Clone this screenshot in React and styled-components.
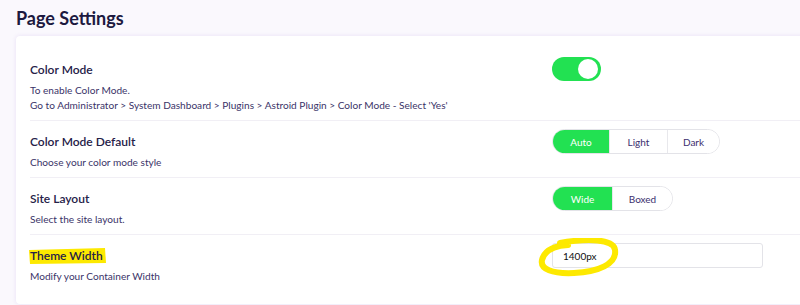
import React from 'react'
import styled, { createGlobalStyle } from 'styled-components'

const Global = createGlobalStyle`
body{margin:0;background:#faf8fd;font-family:Lato,"Noto Sans",sans-serif;overflow:hidden;}
`

const Page = styled.div`
padding:9px 0 0 16px;
height:305px;
box-sizing:border-box;`

const Title = styled.h1`
margin:0 0 8px;
font-size:18px;
font-weight:700;
line-height:19px;
color:#1c1940;`

const Card = styled.div`
background:#fff;
margin-right:-20px;
border-radius:4px;
box-shadow:0 0 4px rgba(120,80,200,0.14);
padding:13px 0 13px 14px;`

const Row = styled.div`
display:grid;
grid-template-columns:522px 1fr;
padding:8px 0 7px;
border-top:${p => (p.$first ? 'none' : '1px solid #f1eff5')};`

const Label = styled.div`
position:relative;
display:inline-block;
margin-top:5px;
font-size:12px;
line-height:16px;
font-weight:600;
color:#252148;
z-index:0;`

const Desc = styled.div`
margin-top:5px;
font-size:10.1px;
line-height:15px;
color:#3a3368;`

const Marker = styled.svg`
position:absolute;
left:-1px;
top:-1px;
z-index:-1;`

const Toggle = styled.div`
width:49px;
height:24px;
border-radius:12px;
background:#22e152;
position:relative;`

const Knob = styled.div`
position:absolute;
right:3px;
top:2px;
width:20px;
height:20px;
border-radius:50%;
background:#fff;`

const Segments = styled.div`
display:inline-flex;
align-self:start;
justify-self:start;
height:25px;
border:1px solid #e3e3e8;
border-radius:13px;
overflow:hidden;
box-sizing:border-box;`

const Segment = styled.div`
width:${p => p.$w}px;
box-sizing:border-box;
display:flex;
align-items:center;
justify-content:center;
font-size:10px;
color:${p => (p.$on ? '#fff' : '#3b2f6e')};
background:${p => (p.$on ? '#22e152' : '#fff')};
border-left:${p => (p.$first ? 'none' : '1px solid #e8e8ec')};`

const InputWrap = styled.div`
position:relative;
width:211px;`

const Input = styled.div`
height:25px;
box-sizing:border-box;
border:1px solid #e3e3e8;
border-radius:3px;
padding-left:10px;
display:flex;
align-items:center;
font-size:10px;
color:#111;`

const Circle = styled.svg`
position:absolute;
left:-14px;
top:-5px;`

export default function App() {
    return (
        <Page>
            <Global/>
            <Title>Page Settings</Title>
            <Card>
                <Row $first>
                    <div>
                        <Label>Color Mode</Label>
                        <Desc>To enable Color Mode.<br/>Go to Administrator &gt; System Dashboard &gt; Plugins &gt; Astroid Plugin &gt; Color Mode - Select 'Yes'</Desc>
                    </div>
                    <div><Toggle><Knob/></Toggle></div>
                </Row>
                <Row>
                    <div>
                        <Label>Color Mode Default</Label>
                        <Desc>Choose your color mode style</Desc>
                    </div>
                    <Segments>
                        <Segment $w={56} $on $first>Auto</Segment>
                        <Segment $w={58}>Light</Segment>
                        <Segment $w={52}>Dark</Segment>
                    </Segments>
                </Row>
                <Row>
                    <div>
                        <Label>Site Layout</Label>
                        <Desc>Select the site layout.</Desc>
                    </div>
                    <Segments>
                        <Segment $w={59} $on $first>Wide</Segment>
                        <Segment $w={60}>Boxed</Segment>
                    </Segments>
                </Row>
                <Row>
                    <div>
                        <Label>
                            <Marker width="80" height="18" viewBox="0 0 80 18">
                                <polygon points="0,3 76,1 77,16 1,17" fill="#fde900"/>
                            </Marker>
                            Theme Width
                        </Label>
                        <Desc>Modify your Container Width</Desc>
                    </div>
                    <div>
                        <InputWrap>
                            <Input>1400px</Input>
                            <Circle width="84" height="40" viewBox="0 0 84 40">
                                <path d="M22 5 C50 0 76 1 77 12 C79 26 60 34 36 35 C14 36 2 31 4 22 C6 14 14 8 30 7" fill="none" stroke="#fde900" strokeWidth="6" strokeLinecap="round"/>
                            </Circle>
                        </InputWrap>
                    </div>
                </Row>
            </Card>
        </Page>
    )
}
